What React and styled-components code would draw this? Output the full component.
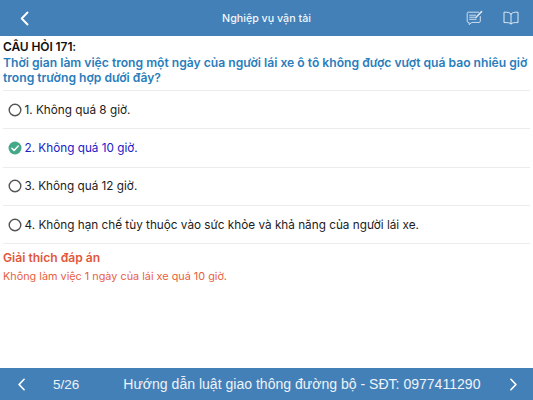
import React from 'react';
import styled, { createGlobalStyle } from 'styled-components';

const GlobalStyle = createGlobalStyle`
  html, body {
    margin: 0;
    padding: 0;
    background: #fff;
  }
  * {
    box-sizing: border-box;
  }
`;

const Page = styled.div`
  width: 533px;
  height: 400px;
  display: flex;
  flex-direction: column;
  overflow: hidden;
  font-family: Inter, "Liberation Sans", sans-serif;
  background: #fff;
`;

const Header = styled.header`
  height: 36px;
  flex: none;
  display: grid;
  grid-template-columns: 1fr auto 1fr;
  align-items: center;
  padding: 0 14px 0 20px;
  background: #4380b8;
  color: #fff;
`;

const HeaderTitle = styled.h1`
  margin: 0 0 0 -6px;
  font-size: 10.7px;
  font-weight: 500;
  color: #f2f6fa;
`;

const HeaderActions = styled.div`
  display: flex;
  justify-content: flex-end;
  align-items: center;
  gap: 20px;
`;

const IconSvg = styled.svg`
  display: block;
  fill: none;
  stroke: ${(p) => p.$stroke || '#dfe9f3'};
  stroke-linecap: round;
  stroke-linejoin: round;
`;

const Content = styled.main`
  flex: 1;
  padding: 4px 3px 0 3px;
`;

const QuestionLabel = styled.div`
  font-size: 12px;
  line-height: 14px;
  font-weight: 600;
  color: #111;
  letter-spacing: -0.1px;
`;

const QuestionText = styled.div`
  margin-top: 1px;
  font-size: 12.13px;
  line-height: 15px;
  font-weight: 600;
  color: #2a7dbb;
  padding-bottom: 5px;
  white-space: nowrap;
`;

const Option = styled.div`
  height: 38.3px;
  display: flex;
  align-items: center;
  gap: 2.5px;
  padding-left: 5px;
  border-top: 1px solid #ececec;
  font-size: 11.75px;
  color: ${(p) => (p.$correct ? '#2020c8' : '#1c1c1c')};
`;

const Explain = styled.section`
  border-top: 1px solid #ececec;
  padding-top: 6px;
`;

const ExplainTitle = styled.div`
  font-size: 12.1px;
  line-height: 16px;
  font-weight: 600;
  color: #e2573a;
`;

const ExplainText = styled.div`
  margin-top: 4px;
  font-size: 10.85px;
  line-height: 13px;
  color: #e8603f;
`;

const Footer = styled.footer`
  height: 32px;
  flex: none;
  display: flex;
  align-items: center;
  padding: 0 15px 0 17px;
  background: #4380b8;
  color: #eef3f8;
  font-family: "Liberation Sans", Arial, sans-serif;
  font-size: 14.05px;
`;

const PageCount = styled.span`
  margin-left: 27px;
  font-size: 13.5px;
`;

const FooterTitle = styled.span`
  margin-left: 44px;
  flex: 1;
  white-space: nowrap;
`;

const Chevron = ({ dir, w = 9, h = 15 }) => (
  <IconSvg $stroke="#fff" width={w} height={h} viewBox="0 0 9 15" strokeWidth="1.9">
    <path d={dir === 'left' ? 'M7.5 1.5 1.7 7.5l5.8 6' : 'M1.5 1.5l5.8 6-5.8 6'} />
  </IconSvg>
);

const NoteIcon = () => (
  <IconSvg width="17" height="16" viewBox="0 0 17 16" strokeWidth="0.9">
    <path d="M12.5 2.2H2.3c-.7 0-1.1.4-1.1 1.1v8c0 .7.4 1.1 1.1 1.1h.8v2.2l2.8-2.2h7.3c.7 0 1.1-.4 1.1-1.1V6.5" />
    <path d="M3.6 5.2h6M3.6 7.2h5M3.6 9.3h6.5" />
    <path d="M9.8 7.5 15.6 1.6" strokeWidth="1.5" />
  </IconSvg>
);

const BookIcon = () => (
  <IconSvg width="16" height="14" viewBox="0 0 16 14" strokeWidth="1">
    <path d="M8 3C7 1.6 5 1 1 1.2v10.4c4-.2 6 .2 7 1.4 1-1.2 3-1.6 7-1.4V1.2C11 1 9 1.6 8 3Z" />
    <path d="M8 3v10" />
  </IconSvg>
);

const RadioIcon = () => (
  <IconSvg $stroke="#555" width="14" height="14" viewBox="0 0 14 14" strokeWidth="1.4">
    <circle cx="7" cy="7" r="5.8" />
  </IconSvg>
);

const CheckIcon = () => (
  <svg width="14" height="14" viewBox="0 0 14 14" style={{ display: 'block' }}>
    <circle cx="7" cy="7" r="6.5" fill="#45a889" />
    <path d="M3.9 7.2 6.1 9.4 10.2 5" fill="none" stroke="#fff" strokeWidth="1.5" strokeLinecap="round" strokeLinejoin="round" />
  </svg>
);

const options = [
  { text: '1. Không quá 8 giờ.' },
  { text: '2. Không quá 10 giờ.', correct: true },
  { text: '3. Không quá 12 giờ.' },
  { text: '4. Không hạn chế tùy thuộc vào sức khỏe và khả năng của người lái xe.' },
];

export default function App() {
  return (
    <>
      <GlobalStyle />
      <Page>
        <Header>
          <Chevron dir="left" w={9} h={15} />
          <HeaderTitle>Nghiệp vụ vận tải</HeaderTitle>
          <HeaderActions>
            <NoteIcon />
            <BookIcon />
          </HeaderActions>
        </Header>
        <Content>
          <QuestionLabel>CÂU HỎI 171:</QuestionLabel>
          <QuestionText>
            Thời gian làm việc trong một ngày của người lái xe ô tô không được vượt quá bao nhiêu giờ
            <br />
            trong trường hợp dưới đây?
          </QuestionText>
          {options.map((o) => (
            <Option key={o.text} $correct={o.correct}>
              {o.correct ? <CheckIcon /> : <RadioIcon />}
              <span>{o.text}</span>
            </Option>
          ))}
          <Explain>
            <ExplainTitle>Giải thích đáp án</ExplainTitle>
            <ExplainText>Không làm việc 1 ngày của lái xe quá 10 giờ.</ExplainText>
          </Explain>
        </Content>
        <Footer>
          <Chevron dir="left" w={9} h={13} />
          <PageCount>5/26</PageCount>
          <FooterTitle>Hướng dẫn luật giao thông đường bộ - SĐT: 0977411290</FooterTitle>
          <Chevron dir="right" w={9} h={13} />
        </Footer>
      </Page>
    </>
  );
}
